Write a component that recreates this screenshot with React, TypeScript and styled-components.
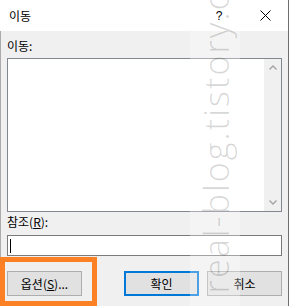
import React from 'react';
import styled, { createGlobalStyle } from 'styled-components';

const GlobalStyle = createGlobalStyle`
  html, body {
    margin: 0;
    padding: 0;
    background: #ffffff;
  }
  body {
    font-family: 'Noto Sans CJK KR', 'Noto Sans', sans-serif;
    font-size: 12px;
    color: #000000;
  }
`;

const Window = styled.div`
  position: relative;
  width: 289px;
  height: 306px;
  overflow: hidden;
  box-sizing: border-box;
  border-right: 1px solid #6e6e6e;
  display: flex;
  flex-direction: column;
`;

const TitleBar = styled.div`
  height: 31px;
  flex-shrink: 0;
  background: #ffffff;
  display: flex;
  align-items: center;
`;

const Title = styled.div`
  flex: 1;
  padding-left: 9px;
  font-size: 12px;
  line-height: 14px;
`;

const CaptionButton = styled.div`
  width: 46px;
  height: 31px;
  display: flex;
  align-items: center;
  justify-content: center;
  font-family: 'Liberation Sans', sans-serif;
  font-size: 12px;
`;

const Body = styled.div`
  flex: 1;
  background: #f0f0f0;
  border-left: 1px solid #ababab;
  padding: 8px 6px 0 6px;
  display: flex;
  flex-direction: column;
`;

const Label = styled.div<{ $top?: number }>`
  line-height: 14px;
  height: 14px;
  margin-top: ${(p) => p.$top || 0}px;
  font-size: 12px;
`;

const ListBox = styled.div`
  margin-top: 5px;
  height: 154px;
  box-sizing: border-box;
  border: 1px solid #828790;
  background: #ffffff;
  display: flex;
  justify-content: flex-end;
`;

const ScrollBar = styled.div`
  width: 17px;
  background: #f0f0f0;
  display: flex;
  flex-direction: column;
  justify-content: space-between;
  align-items: center;
  padding: 6px 0;
`;

const TextBox = styled.div`
  margin-top: 6px;
  height: 21px;
  box-sizing: border-box;
  border: 1px solid #7a7a7a;
  background: #ffffff;
  display: flex;
  align-items: center;
  padding-left: 2px;
`;

const Caret = styled.div`
  width: 1px;
  height: 14px;
  background: #000000;
`;

const ButtonRow = styled.div`
  margin-top: 15px;
  display: flex;
  justify-content: space-between;
`;

const ButtonGroup = styled.div`
  display: flex;
  gap: 8px;
`;

const Button = styled.div<{ $default?: boolean }>`
  width: 75px;
  height: 25px;
  box-sizing: border-box;
  background: #e1e1e1;
  border: ${(p) => (p.$default ? '2px solid #0078d7' : '1px solid #adadad')};
  display: flex;
  align-items: center;
  justify-content: center;
  font-size: 12px;
  line-height: 14px;
`;

const Highlight = styled.div`
  position: absolute;
  left: 0;
  top: 257px;
  width: 97px;
  height: 49px;
  box-sizing: border-box;
  border: 5px solid #fb8124;
  pointer-events: none;
`;

const WatermarkBand = styled.div`
  position: absolute;
  left: 190px;
  top: 31px;
  width: 50px;
  height: 275px;
  background: rgba(255, 255, 255, 0.3);
  pointer-events: none;
`;

const Watermark = styled.div`
  position: absolute;
  left: 193px;
  bottom: 13px;
  writing-mode: vertical-rl;
  transform: rotate(180deg);
  font-family: 'Open Sans', sans-serif;
  font-weight: 300;
  font-size: 34px;
  letter-spacing: 2.1px;
  line-height: 46px;
  color: rgba(0, 0, 0, 0.16);
  white-space: nowrap;
  pointer-events: none;
`;

const Chevron = ({ up }: { up?: boolean }) => (
  <svg width="8" height="5" viewBox="0 0 8 5">
    <path
      d={up ? 'M0.5 4.5 L4 1 L7.5 4.5' : 'M0.5 0.5 L4 4 L7.5 0.5'}
      fill="none"
      stroke="#a3a3a3"
      strokeWidth="1.4"
    />
  </svg>
);

const CloseIcon = () => (
  <svg width="11" height="11" viewBox="0 0 11 11">
    <path d="M0.5 0.5 L10.5 10.5 M10.5 0.5 L0.5 10.5" stroke="#000" strokeWidth="1" />
  </svg>
);

export default function App() {
  return (
    <>
      <GlobalStyle />
      <Window>
        <TitleBar>
          <Title>이동</Title>
          <CaptionButton>?</CaptionButton>
          <CaptionButton>
            <CloseIcon />
          </CaptionButton>
        </TitleBar>
        <Body>
          <Label>이동:</Label>
          <ListBox>
            <ScrollBar>
              <Chevron up />
              <Chevron />
            </ScrollBar>
          </ListBox>
          <Label $top={3}>
            참조(<u>R</u>):
          </Label>
          <TextBox>
            <Caret />
          </TextBox>
          <ButtonRow>
            <Button>
              옵션(<u>S</u>)...
            </Button>
            <ButtonGroup>
              <Button $default>확인</Button>
              <Button>취소</Button>
            </ButtonGroup>
          </ButtonRow>
        </Body>
        <WatermarkBand />
        <Watermark>real-blog.tistory.co</Watermark>
        <Highlight />
      </Window>
    </>
  );
}
